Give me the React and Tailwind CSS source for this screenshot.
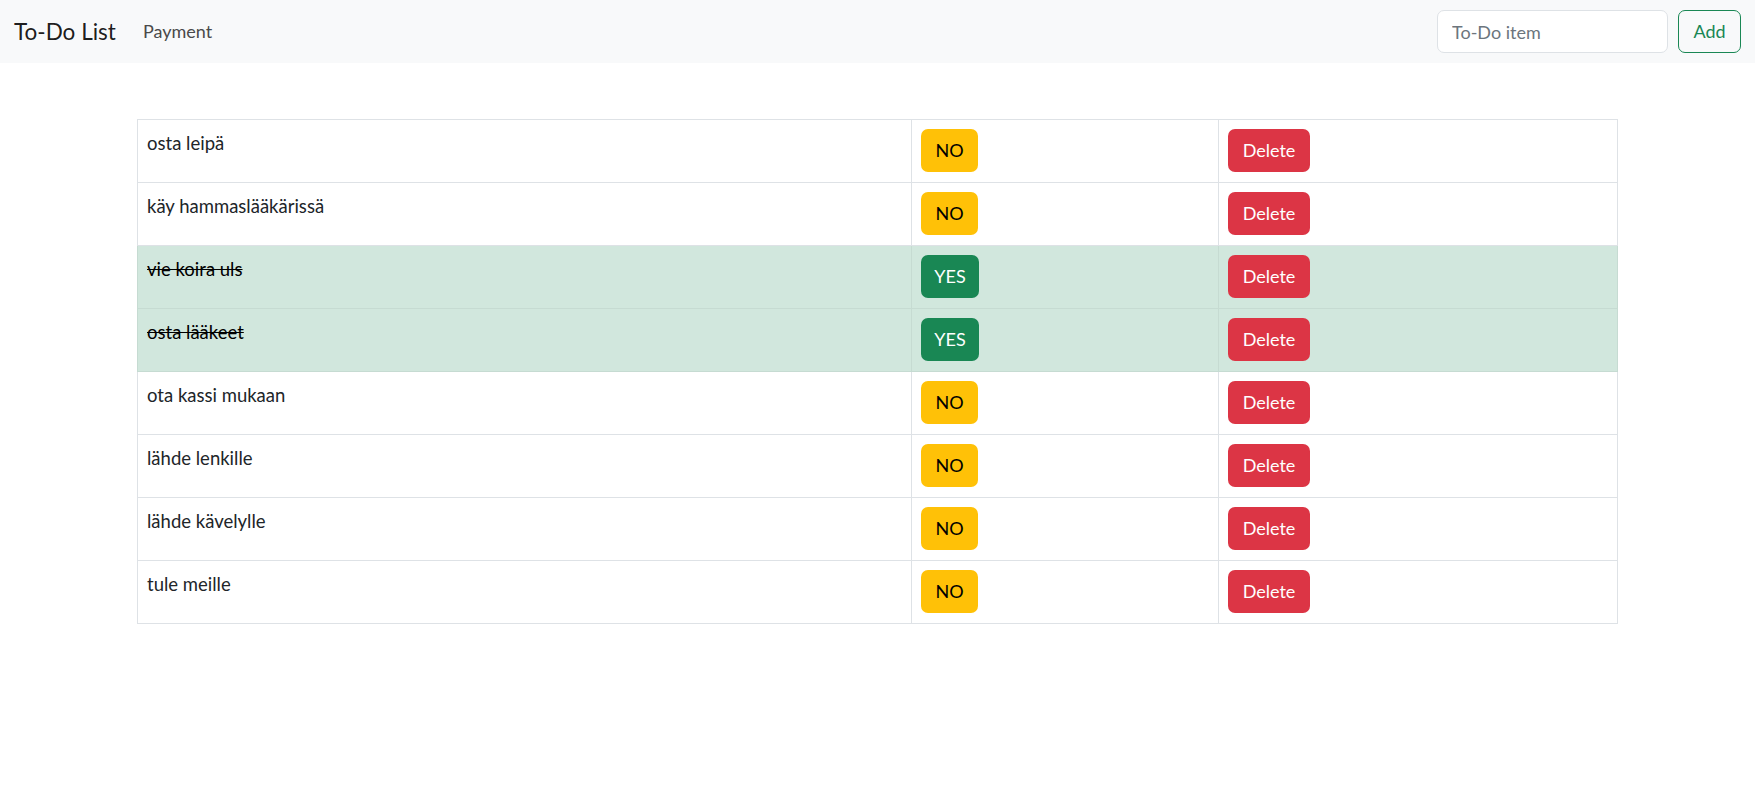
const todos = [
  { id: 1, text: 'osta leipä', done: false },
  { id: 2, text: 'käy hammaslääkärissä', done: false },
  { id: 3, text: 'vie koira uls', done: true },
  { id: 4, text: 'osta lääkeet', done: true },
  { id: 5, text: 'ota kassi mukaan', done: false },
  { id: 6, text: 'lähde lenkille', done: false },
  { id: 7, text: 'lähde kävelylle', done: false },
  { id: 8, text: 'tule meille', done: false },
];

export default function App() {
  return (
    <div className="min-h-screen bg-white text-[#212529] font-['Lato','Noto_Sans',sans-serif]">
      {/* Navbar */}
      <nav className="h-[63px] bg-[#f8f9fa] flex items-center justify-between px-[14px]">
        <div className="flex items-center">
          <span className="text-[22.5px] text-black/90 mr-[18px]">To-Do List</span>
          <a className="text-[18px] text-[#4a4a4a] px-[9px] py-[9px]">Payment</a>
        </div>
        <div className="flex items-center gap-[10px]">
          <input
            type="text"
            placeholder="To-Do item"
            className="w-[231px] h-[43px] border border-[#dee2e6] rounded-[7px] bg-white px-[14px] text-[18px] placeholder:text-[#6c757d] focus:outline-none"
          />
          <button className="w-[63px] h-[43px] border border-[#198754] rounded-[7px] text-[#198754] text-[18px]">
            Add
          </button>
        </div>
      </nav>

      {/* Taulukko */}
      <div className="w-[1481px] mx-auto mt-[56px]">
        <table className="w-full border-collapse table-fixed">
          <colgroup>
            <col className="w-[774px]" />
            <col className="w-[307px]" />
            <col />
          </colgroup>
          <tbody>
            {todos.map((todo) => (
              <tr
                key={todo.id}
                className={todo.done ? 'bg-[#d1e7dd]' : 'bg-white'}
              >
                <td className={`border px-[9px] pt-[10px] pb-[9px] align-top text-[18.5px] leading-[27px] ${todo.done ? 'border-[#c6dbd2] line-through text-black' : 'border-[#dee2e6]'}`}>
                  {todo.text}
                </td>
                <td className={`border px-[9px] pt-[9px] pb-[10px] align-top ${todo.done ? 'border-[#c6dbd2]' : 'border-[#dee2e6]'}`}>
                  {todo.done ? (
                    <button className="h-[43px] w-[58px] rounded-[7px] bg-[#198754] text-white text-[18px]">YES</button>
                  ) : (
                    <button className="h-[43px] w-[57px] rounded-[7px] bg-[#ffc107] text-black text-[18px]">NO</button>
                  )}
                </td>
                <td className={`border px-[9px] pt-[9px] pb-[10px] align-top ${todo.done ? 'border-[#c6dbd2]' : 'border-[#dee2e6]'}`}>
                  <button className="h-[43px] w-[82px] rounded-[7px] bg-[#dc3545] text-white text-[18px]">Delete</button>
                </td>
              </tr>
            ))}
          </tbody>
        </table>
      </div>
    </div>
  );
}
